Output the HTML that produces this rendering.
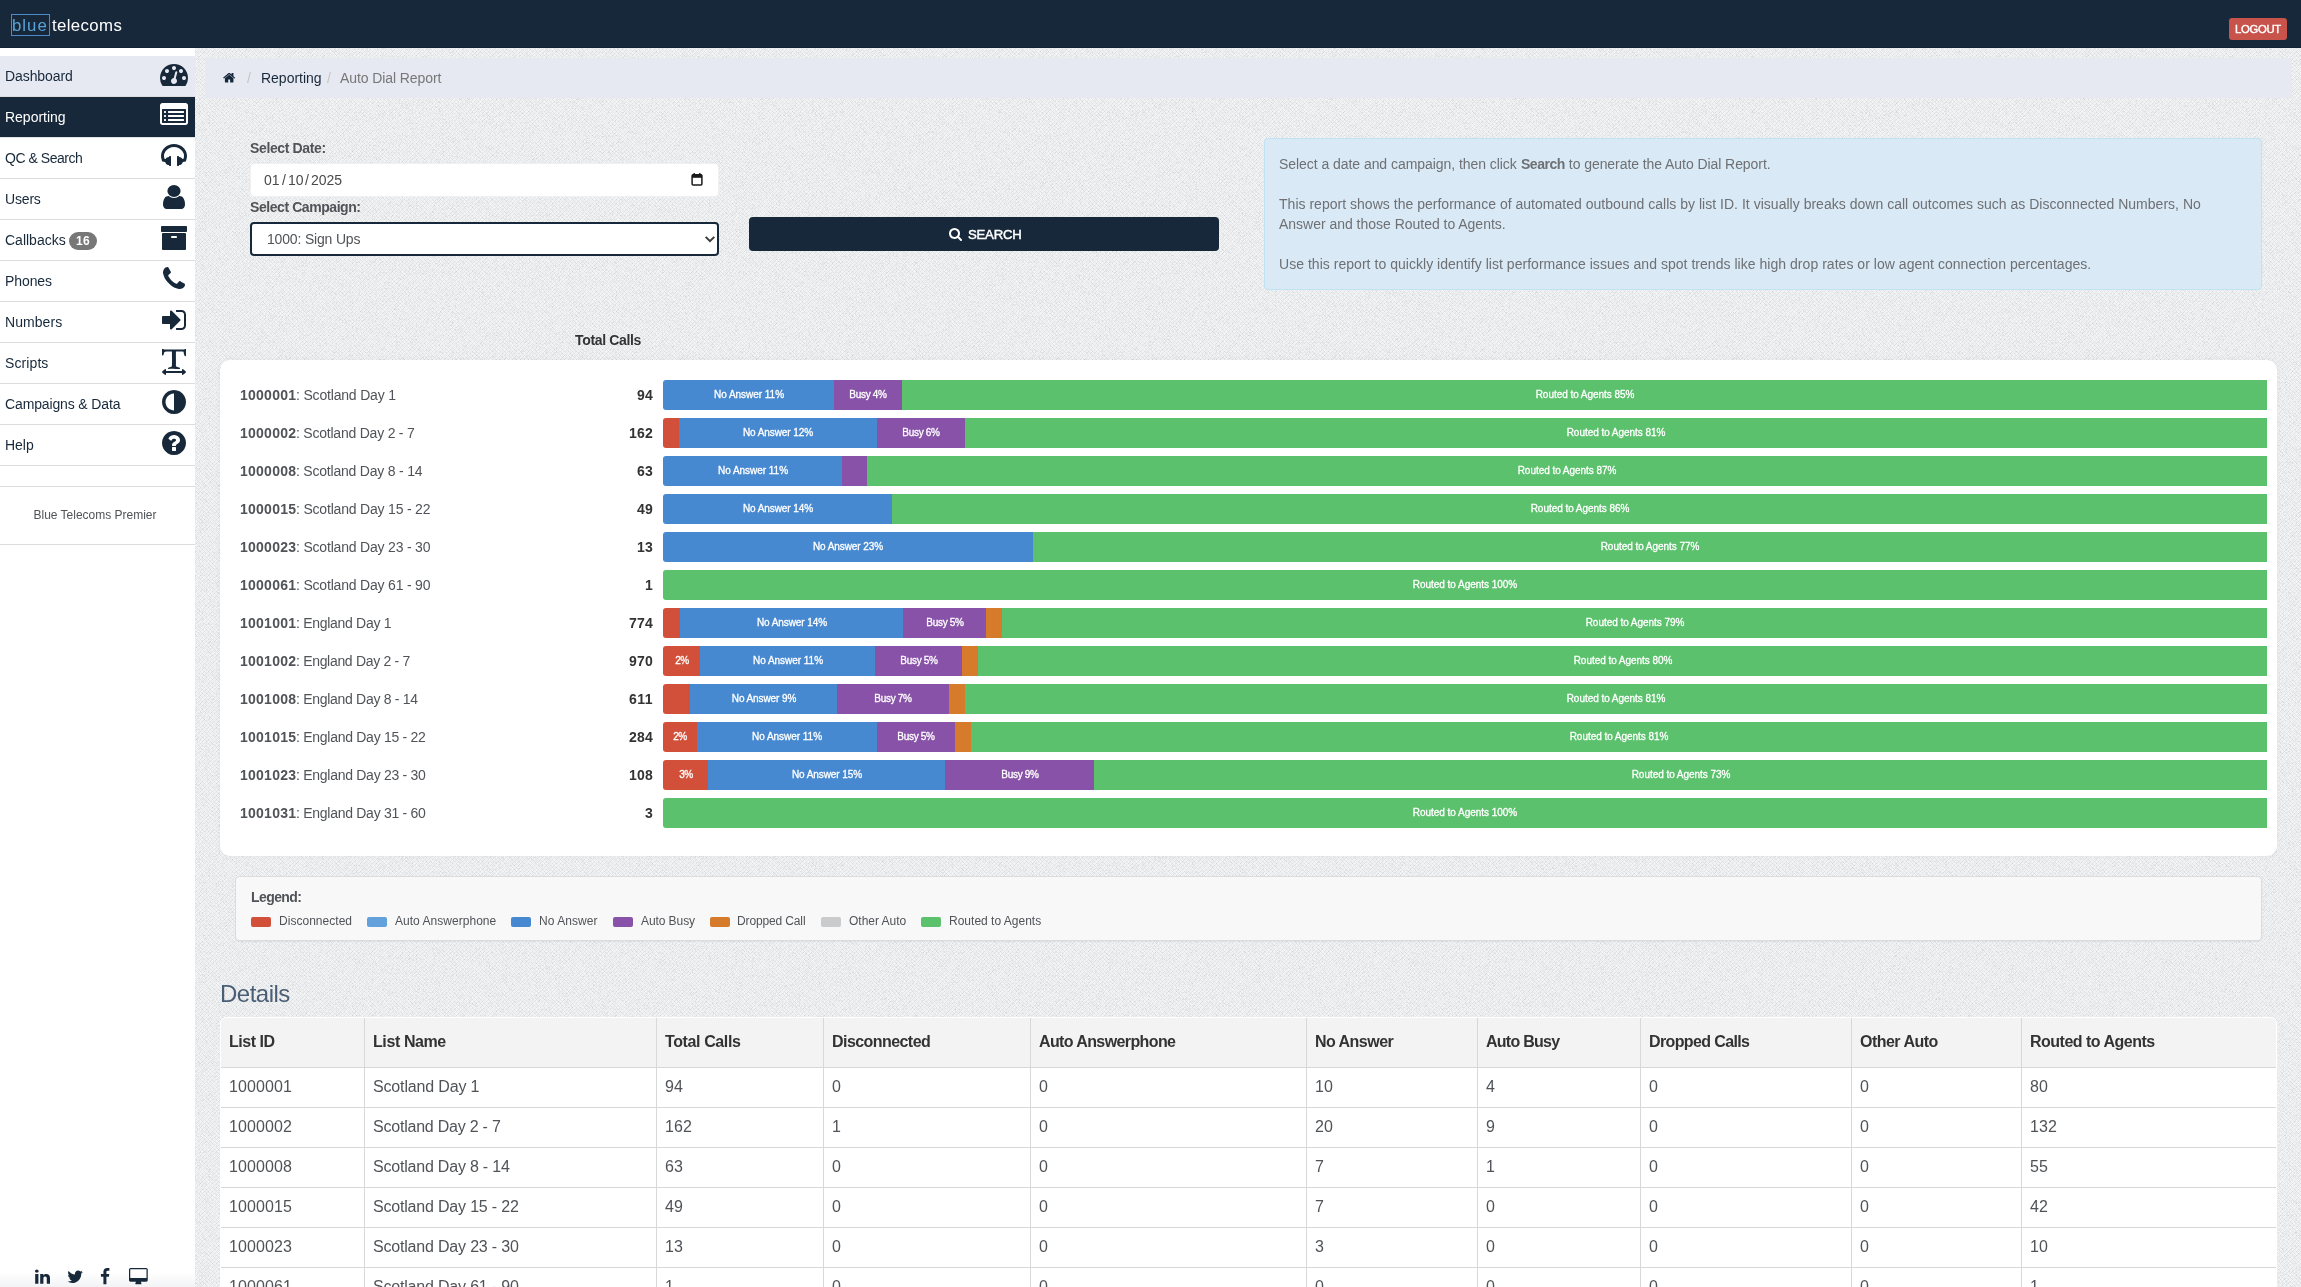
<!DOCTYPE html>
<html lang="en"><head><meta charset="utf-8"><title>Auto Dial Report</title>
<style>
html,body{margin:0;padding:0}
body{width:2301px;height:1287px;overflow:hidden;position:relative;font-family:"Liberation Sans",sans-serif;font-size:14px;color:#505357;
background-color:#f3f4f5;
background-image:repeating-linear-gradient(45deg,rgba(104,108,111,0.075) 0,rgba(104,108,111,0.075) 0.6px,rgba(255,255,255,0) 0.6px,rgba(255,255,255,0) 2.828px),repeating-linear-gradient(-45deg,rgba(104,108,111,0.075) 0,rgba(104,108,111,0.075) 0.6px,rgba(255,255,255,0) 0.6px,rgba(255,255,255,0) 2.828px);}
div,span.t,svg.i{position:absolute}
span.t{white-space:pre;will-change:transform}
b{font-weight:700}
</style></head>
<body>
<div id="page" style="left:0;top:0;width:2301px;height:1287px;overflow:hidden">
<svg class="i" style="left:195px;top:48px" width="2106" height="1239"><filter id="nz" x="0" y="0" width="100%" height="100%" color-interpolation-filters="sRGB"><feTurbulence type="fractalNoise" baseFrequency="1.7" numOctaves="1" seed="3"/><feColorMatrix type="matrix" values="0 0 0 0 0.41  0 0 0 0 0.43  0 0 0 0 0.44  -0.6 0 0 0 0.3"/></filter><rect width="2106" height="1239" filter="url(#nz)"/></svg>
<div style="left:0px;top:0px;width:2301px;height:48px;background:#17283a;box-sizing:border-box;border-bottom:1px solid #122132"></div>
<div style="left:11px;top:14px;width:39px;height:22px;box-sizing:border-box;border:1px solid #4b8bc8"></div>
<span id="t0" class="t" style="top:14.18px;line-height:24px;font-size:16.8px;color:#5aa2d6;letter-spacing:1.0px;left:12.3px;">blue</span>
<span id="t1" class="t" style="top:14.18px;line-height:24px;font-size:16.8px;color:#fff;letter-spacing:0.38px;left:51.6px;">telecoms</span>
<div style="left:2229px;top:18px;width:58px;height:22px;background:#c7534a;border-radius:3px"></div>
<span id="t2" class="t" style="top:21.38px;line-height:16px;font-size:11.3px;color:#fff;letter-spacing:-0.29px;left:2258.2px;transform:translateX(-50%);-webkit-text-stroke:0.4px #fff;">LOGOUT</span>
<div style="left:0px;top:48px;width:195px;height:1239px;background:#fff"></div>
<div style="left:0px;top:56px;width:195px;height:41px;background:#e7e9f2;box-sizing:border-box;border-bottom:1px solid #ddd"></div>
<span id="t3" class="t" style="top:65.95px;line-height:20px;font-size:14px;color:#17283a;letter-spacing:-0.087px;left:5px;">Dashboard</span>
<svg class="i" style="left:160.00px;top:60.00px" width="28.00" height="28" viewBox="0 0 1792 1792" preserveAspectRatio="none"><path fill="#17283a" transform="translate(0,1536) scale(1,-1)" d="M384 384q0 53 -37.5 90.5t-90.5 37.5t-90.5 -37.5t-37.5 -90.5t37.5 -90.5t90.5 -37.5t90.5 37.5t37.5 90.5zM576 832q0 53 -37.5 90.5t-90.5 37.5t-90.5 -37.5t-37.5 -90.5t37.5 -90.5t90.5 -37.5t90.5 37.5t37.5 90.5zM1004 351l101 382q6 26 -7.5 48.5t-38.5 29.5 t-48 -6.5t-30 -39.5l-101 -382q-60 -5 -107 -43.5t-63 -98.5q-20 -77 20 -146t117 -89t146 20t89 117q16 60 -6 117t-72 91zM1664 384q0 53 -37.5 90.5t-90.5 37.5t-90.5 -37.5t-37.5 -90.5t37.5 -90.5t90.5 -37.5t90.5 37.5t37.5 90.5zM1024 1024q0 53 -37.5 90.5 t-90.5 37.5t-90.5 -37.5t-37.5 -90.5t37.5 -90.5t90.5 -37.5t90.5 37.5t37.5 90.5zM1472 832q0 53 -37.5 90.5t-90.5 37.5t-90.5 -37.5t-37.5 -90.5t37.5 -90.5t90.5 -37.5t90.5 37.5t37.5 90.5zM1792 384q0 -261 -141 -483q-19 -29 -54 -29h-1402q-35 0 -54 29 q-141 221 -141 483q0 182 71 348t191 286t286 191t348 71t348 -71t286 -191t191 -286t71 -348z"/></svg>
<div style="left:0px;top:97px;width:195px;height:41px;background:#17283a;box-sizing:border-box;border-bottom:1px solid #e4e4e4"></div>
<span id="t4" class="t" style="top:106.95px;line-height:20px;font-size:14px;color:#fff;letter-spacing:-0.016px;left:5px;">Reporting</span>
<svg class="i" style="left:160.00px;top:101.00px" width="28.00" height="28" viewBox="0 0 1792 1792" preserveAspectRatio="none"><path fill="#fff" transform="translate(0,1536) scale(1,-1)" d="M384 352v-64q0 -13 -9.5 -22.5t-22.5 -9.5h-64q-13 0 -22.5 9.5t-9.5 22.5v64q0 13 9.5 22.5t22.5 9.5h64q13 0 22.5 -9.5t9.5 -22.5zM384 608v-64q0 -13 -9.5 -22.5t-22.5 -9.5h-64q-13 0 -22.5 9.5t-9.5 22.5v64q0 13 9.5 22.5t22.5 9.5h64q13 0 22.5 -9.5t9.5 -22.5z M384 864v-64q0 -13 -9.5 -22.5t-22.5 -9.5h-64q-13 0 -22.5 9.5t-9.5 22.5v64q0 13 9.5 22.5t22.5 9.5h64q13 0 22.5 -9.5t9.5 -22.5zM1536 352v-64q0 -13 -9.5 -22.5t-22.5 -9.5h-960q-13 0 -22.5 9.5t-9.5 22.5v64q0 13 9.5 22.5t22.5 9.5h960q13 0 22.5 -9.5t9.5 -22.5z M1536 608v-64q0 -13 -9.5 -22.5t-22.5 -9.5h-960q-13 0 -22.5 9.5t-9.5 22.5v64q0 13 9.5 22.5t22.5 9.5h960q13 0 22.5 -9.5t9.5 -22.5zM1536 864v-64q0 -13 -9.5 -22.5t-22.5 -9.5h-960q-13 0 -22.5 9.5t-9.5 22.5v64q0 13 9.5 22.5t22.5 9.5h960q13 0 22.5 -9.5 t9.5 -22.5zM1664 160v832q0 13 -9.5 22.5t-22.5 9.5h-1472q-13 0 -22.5 -9.5t-9.5 -22.5v-832q0 -13 9.5 -22.5t22.5 -9.5h1472q13 0 22.5 9.5t9.5 22.5zM1792 1248v-1088q0 -66 -47 -113t-113 -47h-1472q-66 0 -113 47t-47 113v1088q0 66 47 113t113 47h1472q66 0 113 -47 t47 -113z"/></svg>
<div style="left:0px;top:138px;width:195px;height:41px;background:#fff;box-sizing:border-box;border-bottom:1px solid #ddd"></div>
<span id="t5" class="t" style="top:147.95px;line-height:20px;font-size:14px;color:#17283a;letter-spacing:-0.462px;left:5px;">QC &amp; Search</span>
<svg class="i" style="left:161.00px;top:142.00px" width="26.00" height="28" viewBox="0 0 1664 1792" preserveAspectRatio="none"><path fill="#17283a" transform="translate(0,1536) scale(1,-1)" d="M1664 650q0 -166 -60 -314l-20 -49l-185 -33q-22 -83 -90.5 -136.5t-156.5 -53.5v-32q0 -14 -9 -23t-23 -9h-64q-14 0 -23 9t-9 23v576q0 14 9 23t23 9h64q14 0 23 -9t9 -23v-32q71 0 130 -35.5t93 -95.5l68 12q29 95 29 193q0 148 -88 279t-236.5 209t-315.5 78 t-315.5 -78t-236.5 -209t-88 -279q0 -98 29 -193l68 -12q34 60 93 95.5t130 35.5v32q0 14 9 23t23 9h64q14 0 23 -9t9 -23v-576q0 -14 -9 -23t-23 -9h-64q-14 0 -23 9t-9 23v32q-88 0 -156.5 53.5t-90.5 136.5l-185 33l-20 49q-60 148 -60 314q0 151 67 291t179 242.5 t266 163.5t320 61t320 -61t266 -163.5t179 -242.5t67 -291z"/></svg>
<div style="left:0px;top:179px;width:195px;height:41px;background:#fff;box-sizing:border-box;border-bottom:1px solid #ddd"></div>
<span id="t6" class="t" style="top:188.95px;line-height:20px;font-size:14px;color:#17283a;letter-spacing:-0.172px;left:5px;">Users</span>
<svg class="i" style="left:163.00px;top:183.00px" width="22.00" height="28" viewBox="0 0 1280 1792" preserveAspectRatio="none"><path fill="#17283a" transform="translate(0,1536) scale(1,-1)" d="M1280 137q0 -109 -62.5 -187t-150.5 -78h-854q-88 0 -150.5 78t-62.5 187q0 85 8.5 160.5t31.5 152t58.5 131t94 89t134.5 34.5q131 -128 313 -128t313 128q76 0 134.5 -34.5t94 -89t58.5 -131t31.5 -152t8.5 -160.5zM1024 1024q0 -159 -112.5 -271.5t-271.5 -112.5 t-271.5 112.5t-112.5 271.5t112.5 271.5t271.5 112.5t271.5 -112.5t112.5 -271.5z"/></svg>
<div style="left:0px;top:220px;width:195px;height:41px;background:#fff;box-sizing:border-box;border-bottom:1px solid #ddd"></div>
<span id="t7" class="t" style="top:229.95px;line-height:20px;font-size:14px;color:#17283a;left:5px;">Callbacks</span>
<svg class="i" style="left:160.00px;top:224.00px" width="28.00" height="28" viewBox="0 0 1792 1792" preserveAspectRatio="none"><path fill="#17283a" transform="translate(0,1536) scale(1,-1)" d="M1088 704q0 26 -19 45t-45 19h-256q-26 0 -45 -19t-19 -45t19 -45t45 -19h256q26 0 45 19t19 45zM1664 896v-960q0 -26 -19 -45t-45 -19h-1408q-26 0 -45 19t-19 45v960q0 26 19 45t45 19h1408q26 0 45 -19t19 -45zM1728 1344v-256q0 -26 -19 -45t-45 -19h-1536 q-26 0 -45 19t-19 45v256q0 26 19 45t45 19h1536q26 0 45 -19t19 -45z"/></svg>
<div style="left:0px;top:261px;width:195px;height:41px;background:#fff;box-sizing:border-box;border-bottom:1px solid #ddd"></div>
<span id="t8" class="t" style="top:270.95px;line-height:20px;font-size:14px;color:#17283a;letter-spacing:-0.094px;left:5px;">Phones</span>
<svg class="i" style="left:163.00px;top:265.00px" width="22.00" height="28" viewBox="0 0 1408 1792" preserveAspectRatio="none"><path fill="#17283a" transform="translate(0,1536) scale(1,-1)" d="M1408 296q0 -27 -10 -70.5t-21 -68.5q-21 -50 -122 -106q-94 -51 -186 -51q-27 0 -53 3.5t-57.5 12.5t-47 14.5t-55.5 20.5t-49 18q-98 35 -175 83q-127 79 -264 216t-216 264q-48 77 -83 175q-3 9 -18 49t-20.5 55.5t-14.5 47t-12.5 57.5t-3.5 53q0 92 51 186 q56 101 106 122q25 11 68.5 21t70.5 10q14 0 21 -3q18 -6 53 -76q11 -19 30 -54t35 -63.5t31 -53.5q3 -4 17.5 -25t21.5 -35.5t7 -28.5q0 -20 -28.5 -50t-62 -55t-62 -53t-28.5 -46q0 -9 5 -22.5t8.5 -20.5t14 -24t11.5 -19q76 -137 174 -235t235 -174q2 -1 19 -11.5t24 -14 t20.5 -8.5t22.5 -5q18 0 46 28.5t53 62t55 62t50 28.5q14 0 28.5 -7t35.5 -21.5t25 -17.5q25 -15 53.5 -31t63.5 -35t54 -30q70 -35 76 -53q3 -7 3 -21z"/></svg>
<div style="left:0px;top:302px;width:195px;height:41px;background:#fff;box-sizing:border-box;border-bottom:1px solid #ddd"></div>
<span id="t9" class="t" style="top:311.95px;line-height:20px;font-size:14px;color:#17283a;letter-spacing:0.065px;left:5px;">Numbers</span>
<svg class="i" style="left:162.00px;top:306.00px" width="24.00" height="28" viewBox="0 0 1536 1792" preserveAspectRatio="none"><path fill="#17283a" transform="translate(0,1536) scale(1,-1)" d="M1184 640q0 -26 -19 -45l-544 -544q-19 -19 -45 -19t-45 19t-19 45v288h-448q-26 0 -45 19t-19 45v384q0 26 19 45t45 19h448v288q0 26 19 45t45 19t45 -19l544 -544q19 -19 19 -45zM1536 992v-704q0 -119 -84.5 -203.5t-203.5 -84.5h-320q-13 0 -22.5 9.5t-9.5 22.5 q0 4 -1 20t-0.5 26.5t3 23.5t10 19.5t20.5 6.5h320q66 0 113 47t47 113v704q0 66 -47 113t-113 47h-288h-11h-13t-11.5 1t-11.5 3t-8 5.5t-7 9t-2 13.5q0 4 -1 20t-0.5 26.5t3 23.5t10 19.5t20.5 6.5h320q119 0 203.5 -84.5t84.5 -203.5z"/></svg>
<div style="left:0px;top:343px;width:195px;height:41px;background:#fff;box-sizing:border-box;border-bottom:1px solid #ddd"></div>
<span id="t10" class="t" style="top:352.95px;line-height:20px;font-size:14px;color:#17283a;letter-spacing:0.096px;left:5px;">Scripts</span>
<svg class="i" style="left:162.00px;top:347.00px" width="24.00" height="28" viewBox="0 0 1536 1792" preserveAspectRatio="none"><path fill="#17283a" transform="translate(0,1536) scale(1,-1)" d="M81 1407l54 -27q12 -5 211 -5q44 0 132 2t132 2q70 0 246.5 1t304.5 0.5t247 -4.5q33 -1 56 31l42 1q4 0 14 -0.5t14 -0.5q2 -112 2 -336q0 -80 -5 -109q-39 -14 -68 -18q-25 44 -54 128q-3 9 -11 47.5t-15 73.5t-7 36q-10 13 -27 19q-5 2 -66 2q-30 0 -93 1t-103 1 t-94 -2t-96 -7q-9 -81 -8 -136l1 -152v52q0 -55 1 -154t1.5 -180t0.5 -153q0 -16 -2.5 -71.5t0 -91.5t12.5 -69q40 -21 124 -42.5t120 -37.5q5 -40 5 -50q0 -14 -3 -29l-34 -1q-76 -2 -218 8t-207 10q-50 0 -151 -9t-152 -9q-3 51 -3 52v9q17 27 61.5 43t98.5 29t78 27 q7 16 11.5 74t6 145.5t1.5 155t-0.5 153.5t-0.5 89q0 7 -2.5 21.5t-2.5 22.5q0 7 0.5 44t1 73t0 76.5t-3 67.5t-6.5 32q-11 12 -162 12q-41 0 -163 -13.5t-138 -24.5q-19 -12 -34 -71.5t-31.5 -111.5t-42.5 -54q-42 26 -56 44v383zM1310 125q12 0 42 -19.5t57.5 -41.5 t59.5 -49t36 -30q26 -21 26 -49t-26 -49q-4 -3 -36 -30t-59.5 -49t-57.5 -41.5t-42 -19.5q-13 0 -20.5 10.5t-10 28.5t-2.5 33.5t1.5 33t1.5 19.5h-1024q0 -2 1.5 -19.5t1.5 -33t-2.5 -33.5t-10 -28.5t-20.5 -10.5q-12 0 -42 19.5t-57.5 41.5t-59.5 49t-36 30q-26 21 -26 49 t26 49q4 3 36 30t59.5 49t57.5 41.5t42 19.5q13 0 20.5 -10.5t10 -28.5t2.5 -33.5t-1.5 -33t-1.5 -19.5h1024q0 2 -1.5 19.5t-1.5 33t2.5 33.5t10 28.5t20.5 10.5z"/></svg>
<div style="left:0px;top:384px;width:195px;height:41px;background:#fff;box-sizing:border-box;border-bottom:1px solid #ddd"></div>
<span id="t11" class="t" style="top:393.95px;line-height:20px;font-size:14px;color:#17283a;letter-spacing:-0.135px;left:5px;">Campaigns &amp; Data</span>
<svg class="i" style="left:162.00px;top:388.00px" width="24.00" height="28" viewBox="0 0 1536 1792" preserveAspectRatio="none"><path fill="#17283a" transform="translate(0,1536) scale(1,-1)" d="M768 96v1088q-148 0 -273 -73t-198 -198t-73 -273t73 -273t198 -198t273 -73zM1536 640q0 -209 -103 -385.5t-279.5 -279.5t-385.5 -103t-385.5 103t-279.5 279.5t-103 385.5t103 385.5t279.5 279.5t385.5 103t385.5 -103t279.5 -279.5t103 -385.5z"/></svg>
<div style="left:0px;top:425px;width:195px;height:41px;background:#fff;box-sizing:border-box;border-bottom:1px solid #ddd"></div>
<span id="t12" class="t" style="top:434.95px;line-height:20px;font-size:14px;color:#17283a;letter-spacing:-0.027px;left:5px;">Help</span>
<svg class="i" style="left:162.00px;top:429.00px" width="24.00" height="28" viewBox="0 0 1536 1792" preserveAspectRatio="none"><path fill="#17283a" transform="translate(0,1536) scale(1,-1)" d="M896 160v192q0 14 -9 23t-23 9h-192q-14 0 -23 -9t-9 -23v-192q0 -14 9 -23t23 -9h192q14 0 23 9t9 23zM1152 832q0 88 -55.5 163t-138.5 116t-170 41q-243 0 -371 -213q-15 -24 8 -42l132 -100q7 -6 19 -6q16 0 25 12q53 68 86 92q34 24 86 24q48 0 85.5 -26t37.5 -59 q0 -38 -20 -61t-68 -45q-63 -28 -115.5 -86.5t-52.5 -125.5v-36q0 -14 9 -23t23 -9h192q14 0 23 9t9 23q0 19 21.5 49.5t54.5 49.5q32 18 49 28.5t46 35t44.5 48t28 60.5t12.5 81zM1536 640q0 -209 -103 -385.5t-279.5 -279.5t-385.5 -103t-385.5 103t-279.5 279.5 t-103 385.5t103 385.5t279.5 279.5t385.5 103t385.5 -103t279.5 -279.5t103 -385.5z"/></svg>
<div style="left:69px;top:232px;width:28px;height:18px;background:#777;border-radius:10px"></div>
<span id="t13" class="t" style="top:232.64px;line-height:17px;font-size:12px;font-weight:700;color:#fff;letter-spacing:0.211px;left:83px;transform:translateX(-50%);">16</span>
<div style="left:0px;top:486px;width:195px;height:1px;background:#ddd"></div>
<div style="left:0px;top:544px;width:195px;height:1px;background:#ddd"></div>
<span id="t14" class="t" style="top:507.04px;line-height:17px;font-size:12px;letter-spacing:-0.012px;left:95.3px;transform:translateX(-50%);">Blue Telecoms Premier</span>
<div style="left:0px;top:1272px;width:195px;height:15px;background:linear-gradient(to bottom,rgba(233,235,238,0),rgba(233,235,238,0.6))"></div>
<svg class="i" style="left:34.70px;top:1268.00px" width="15.00" height="17.5" viewBox="0 0 1536 1792" preserveAspectRatio="none"><path fill="#17283a" transform="translate(0,1536) scale(1,-1)" d="M349 911v-991h-330v991h330zM370 1217q1 -73 -50.5 -122t-135.5 -49h-2q-82 0 -132 49t-50 122q0 74 51.5 122.5t134.5 48.5t133 -48.5t51 -122.5zM1536 488v-568h-329v530q0 105 -40.5 164.5t-126.5 59.5q-63 0 -105.5 -34.5t-63.5 -85.5q-11 -30 -11 -81v-553h-329 q2 399 2 647t-1 296l-1 48h329v-144h-2q20 32 41 56t56.5 52t87 43.5t114.5 15.5q171 0 275 -113.5t104 -332.5z"/></svg>
<svg class="i" style="left:66.90px;top:1268.00px" width="16.25" height="17.5" viewBox="0 0 1664 1792" preserveAspectRatio="none"><path fill="#17283a" transform="translate(0,1536) scale(1,-1)" d="M1620 1128q-67 -98 -162 -167q1 -14 1 -42q0 -130 -38 -259.5t-115.5 -248.5t-184.5 -210.5t-258 -146t-323 -54.5q-271 0 -496 145q35 -4 78 -4q225 0 401 138q-105 2 -188 64.5t-114 159.5q33 -5 61 -5q43 0 85 11q-112 23 -185.5 111.5t-73.5 205.5v4q68 -38 146 -41 q-66 44 -105 115t-39 154q0 88 44 163q121 -149 294.5 -238.5t371.5 -99.5q-8 38 -8 74q0 134 94.5 228.5t228.5 94.5q140 0 236 -102q109 21 205 78q-37 -115 -142 -178q93 10 186 50z"/></svg>
<svg class="i" style="left:100.10px;top:1268.00px" width="10.00" height="17.5" viewBox="0 0 1024 1792" preserveAspectRatio="none"><path fill="#17283a" transform="translate(0,1536) scale(1,-1)" d="M959 1524v-264h-157q-86 0 -116 -36t-30 -108v-189h293l-39 -296h-254v-759h-306v759h-255v296h255v218q0 186 104 288.5t277 102.5q147 0 228 -12z"/></svg>
<svg class="i" style="left:129.30px;top:1268.00px" width="18.75" height="17.5" viewBox="0 0 1920 1792" preserveAspectRatio="none"><path fill="#17283a" transform="translate(0,1536) scale(1,-1)" d="M1792 544v832q0 13 -9.5 22.5t-22.5 9.5h-1600q-13 0 -22.5 -9.5t-9.5 -22.5v-832q0 -13 9.5 -22.5t22.5 -9.5h1600q13 0 22.5 9.5t9.5 22.5zM1920 1376v-1088q0 -66 -47 -113t-113 -47h-544q0 -37 16 -77.5t32 -71t16 -43.5q0 -26 -19 -45t-45 -19h-512q-26 0 -45 19 t-19 45q0 14 16 44t32 70t16 78h-544q-66 0 -113 47t-47 113v1088q0 66 47 113t113 47h1600q66 0 113 -47t47 -113z"/></svg>
<div style="left:205px;top:58px;width:2087px;height:40px;background:#e7e9f2;border-radius:1px"></div>
<svg class="i" style="left:222.80px;top:71.10px" width="12.35" height="13.3" viewBox="0 0 1664 1792" preserveAspectRatio="none"><path fill="#17283a" transform="translate(0,1536) scale(1,-1)" d="M1408 544v-480q0 -26 -19 -45t-45 -19h-384v384h-256v-384h-384q-26 0 -45 19t-19 45v480q0 1 0.5 3t0.5 3l575 474l575 -474q1 -2 1 -6zM1631 613l-62 -74q-8 -9 -21 -11h-3q-13 0 -21 7l-692 577l-692 -577q-12 -8 -24 -7q-13 2 -21 11l-62 74q-8 10 -7 23.5t11 21.5 l719 599q32 26 76 26t76 -26l244 -204v195q0 14 9 23t23 9h192q14 0 23 -9t9 -23v-408l219 -182q10 -8 11 -21.5t-7 -23.5z"/></svg>
<span id="t15" class="t" style="top:68.05px;line-height:20px;font-size:14px;color:#c4c4c4;left:247.2px;">/</span>
<span id="t16" class="t" style="top:68.05px;line-height:20px;font-size:14px;color:#17283a;letter-spacing:-0.016px;left:260.6px;">Reporting</span>
<span id="t17" class="t" style="top:68.05px;line-height:20px;font-size:14px;color:#c4c4c4;left:326.7px;">/</span>
<span id="t18" class="t" style="top:68.05px;line-height:20px;font-size:14px;color:#777;letter-spacing:-0.087px;left:340.3px;">Auto Dial Report</span>
<span id="t19" class="t" style="top:138.35px;line-height:20px;font-size:14px;font-weight:700;letter-spacing:-0.363px;left:250px;">Select Date:</span>
<div style="left:250px;top:163px;width:469px;height:34px;background:#fff;border-radius:4px;box-sizing:border-box;border:1px solid #f0f0f0"></div>
<span id="t20" class="t" style="top:169.95px;line-height:20px;font-size:14px;color:#4a4a4a;left:263.6px;">01</span>
<span id="t21" class="t" style="top:169.95px;line-height:20px;font-size:14px;color:#4a4a4a;left:281.8px;">/</span>
<span id="t22" class="t" style="top:169.95px;line-height:20px;font-size:14px;color:#4a4a4a;left:287.7px;">10</span>
<span id="t23" class="t" style="top:169.95px;line-height:20px;font-size:14px;color:#4a4a4a;left:305.0px;">/</span>
<span id="t24" class="t" style="top:169.95px;line-height:20px;font-size:14px;color:#4a4a4a;left:311.1px;">2025</span>
<svg class="i" style="left:690px;top:172px" width="14" height="15" viewBox="0 0 14 15"><rect x="2.1" y="2.7" width="9.8" height="10.2" rx="1" fill="none" stroke="#1a1a1a" stroke-width="1.5"/><rect x="2" y="2.6" width="10" height="3.2" fill="#1a1a1a"/><rect x="3.5" y="1" width="1.4" height="2" fill="#1a1a1a"/><rect x="9.1" y="1" width="1.4" height="2" fill="#1a1a1a"/></svg>
<span id="t25" class="t" style="top:197.25px;line-height:20px;font-size:14px;font-weight:700;letter-spacing:-0.430px;left:250px;">Select Campaign:</span>
<div style="left:250px;top:222px;width:469px;height:34px;background:#fff;border-radius:4px;box-sizing:border-box;border:2px solid #17283a"></div>
<span id="t26" class="t" style="top:229.15px;line-height:20px;font-size:14px;letter-spacing:-0.174px;left:267.3px;">1000: Sign Ups</span>
<svg class="i" style="left:704px;top:234px" width="12" height="10" viewBox="0 0 12 10"><path d="M1.7 2.9 L6 7.2 L10.3 2.9" fill="none" stroke="#3c3c3c" stroke-width="2"/></svg>
<div style="left:749px;top:217px;width:470px;height:34px;background:#17283a;border-radius:4px"></div>
<svg class="i" style="left:949.00px;top:226.50px" width="13.00" height="14" viewBox="0 0 1664 1792" preserveAspectRatio="none"><path fill="#fff" transform="translate(0,1536) scale(1,-1)" d="M1152 704q0 185 -131.5 316.5t-316.5 131.5t-316.5 -131.5t-131.5 -316.5t131.5 -316.5t316.5 -131.5t316.5 131.5t131.5 316.5zM1664 -128q0 -52 -38 -90t-90 -38q-54 0 -90 38l-343 342q-179 -124 -399 -124q-143 0 -273.5 55.5t-225 150t-150 225t-55.5 273.5 t55.5 273.5t150 225t225 150t273.5 55.5t273.5 -55.5t225 -150t150 -225t55.5 -273.5q0 -220 -124 -399l343 -343q37 -37 37 -90z"/></svg>
<span id="t27" class="t" style="top:225.23px;line-height:19px;font-size:13.2px;color:#fff;letter-spacing:-0.24px;left:967.8px;-webkit-text-stroke:0.45px #fff;">SEARCH</span>
<div style="left:1264px;top:138px;width:998px;height:152px;background:#d9e9f5;box-sizing:border-box;border:1px solid #bfe3f0;border-radius:4px"></div>
<span id="t28" class="t" style="top:154.15px;line-height:20px;font-size:14px;color:#6e7073;letter-spacing:-0.051px;left:1279.3px;">Select a date and campaign, then click </span>
<span id="t29" class="t" style="top:154.15px;line-height:20px;font-size:14px;font-weight:700;color:#6e7073;letter-spacing:-0.482px;left:1520.9px;">Search</span>
<span id="t30" class="t" style="top:154.15px;line-height:20px;font-size:14px;color:#6e7073;letter-spacing:-0.066px;left:1564.7px;"> to generate the Auto Dial Report.</span>
<span id="t31" class="t" style="top:194.15px;line-height:20px;font-size:14px;color:#6e7073;letter-spacing:0.020px;left:1279.3px;">This report shows the performance of automated outbound calls by list ID. It visually breaks down call outcomes such as Disconnected Numbers, No</span>
<span id="t32" class="t" style="top:214.15px;line-height:20px;font-size:14px;color:#6e7073;letter-spacing:-0.019px;left:1279.3px;">Answer and those Routed to Agents.</span>
<span id="t33" class="t" style="top:254.15px;line-height:20px;font-size:14px;color:#6e7073;letter-spacing:0.034px;left:1279.3px;">Use this report to quickly identify list performance issues and spot trends like high drop rates or low agent connection percentages.</span>
<span id="t34" class="t" style="top:329.95px;line-height:20px;font-size:14px;font-weight:700;color:#333;letter-spacing:-0.335px;left:575.2px;">Total Calls</span>
<div style="left:220px;top:360px;width:2057px;height:496px;background:#fff;border-radius:10px;box-shadow:0 0 6px rgba(0,0,0,0.04)"></div>
<span id="t35" class="t" style="top:384.95px;line-height:20px;font-size:14px;font-weight:700;letter-spacing:0.246px;left:240px;">1000001</span>
<span id="t36" class="t" style="top:384.95px;line-height:20px;font-size:14px;letter-spacing:-0.180px;left:296.23px;">: Scotland Day 1</span>
<span id="t37" class="t" style="top:384.95px;line-height:20px;font-size:14px;font-weight:700;color:#333;letter-spacing:0.250px;right:1647.7px;">94</span>
<div style="left:663.2px;top:380px;width:171.0px;height:30px;background:#4789d1;border-radius:3px 0 0 3px;"></div>
<span id="t38" class="t" style="top:388.24px;line-height:14px;font-size:10px;color:#fff;letter-spacing:-0.028px;left:748.7px;transform:translateX(-50%);-webkit-text-stroke:0.3px #fff;">No Answer 11%</span>
<div style="left:834.2px;top:380px;width:67.8px;height:30px;background:#8852a8;"></div>
<span id="t39" class="t" style="top:388.24px;line-height:14px;font-size:10px;color:#fff;letter-spacing:-0.288px;left:868.1px;transform:translateX(-50%);-webkit-text-stroke:0.3px #fff;">Busy 4%</span>
<div style="left:902px;top:380px;width:1365px;height:30px;background:#5bc16c;"></div>
<span id="t40" class="t" style="top:388.24px;line-height:14px;font-size:10px;color:#fff;letter-spacing:-0.045px;left:1584.5px;transform:translateX(-50%);-webkit-text-stroke:0.3px #fff;">Routed to Agents 85%</span>
<span id="t41" class="t" style="top:422.95px;line-height:20px;font-size:14px;font-weight:700;letter-spacing:0.246px;left:240px;">1000002</span>
<span id="t42" class="t" style="top:422.95px;line-height:20px;font-size:14px;letter-spacing:-0.220px;left:296.23px;">: Scotland Day 2 - 7</span>
<span id="t43" class="t" style="top:422.95px;line-height:20px;font-size:14px;font-weight:700;color:#333;letter-spacing:0.250px;right:1647.7px;">162</span>
<div style="left:663.2px;top:418px;width:16.0px;height:30px;background:#d2503a;border-radius:3px 0 0 3px;"></div>
<div style="left:679.2px;top:418px;width:198.0px;height:30px;background:#4789d1;"></div>
<span id="t44" class="t" style="top:426.24px;line-height:14px;font-size:10px;color:#fff;letter-spacing:-0.085px;left:778.2px;transform:translateX(-50%);-webkit-text-stroke:0.3px #fff;">No Answer 12%</span>
<div style="left:877.2px;top:418px;width:88.0px;height:30px;background:#8852a8;"></div>
<span id="t45" class="t" style="top:426.24px;line-height:14px;font-size:10px;color:#fff;letter-spacing:-0.288px;left:921.2px;transform:translateX(-50%);-webkit-text-stroke:0.3px #fff;">Busy 6%</span>
<div style="left:965.2px;top:418px;width:1301.8px;height:30px;background:#5bc16c;"></div>
<span id="t46" class="t" style="top:426.24px;line-height:14px;font-size:10px;color:#fff;letter-spacing:-0.045px;left:1616.1px;transform:translateX(-50%);-webkit-text-stroke:0.3px #fff;">Routed to Agents 81%</span>
<span id="t47" class="t" style="top:460.95px;line-height:20px;font-size:14px;font-weight:700;letter-spacing:0.246px;left:240px;">1000008</span>
<span id="t48" class="t" style="top:460.95px;line-height:20px;font-size:14px;letter-spacing:-0.207px;left:296.23px;">: Scotland Day 8 - 14</span>
<span id="t49" class="t" style="top:460.95px;line-height:20px;font-size:14px;font-weight:700;color:#333;letter-spacing:0.250px;right:1647.7px;">63</span>
<div style="left:663.2px;top:456px;width:179.0px;height:30px;background:#4789d1;border-radius:3px 0 0 3px;"></div>
<span id="t50" class="t" style="top:464.24px;line-height:14px;font-size:10px;color:#fff;letter-spacing:-0.028px;left:752.7px;transform:translateX(-50%);-webkit-text-stroke:0.3px #fff;">No Answer 11%</span>
<div style="left:842.2px;top:456px;width:24.8px;height:30px;background:#8852a8;"></div>
<div style="left:867px;top:456px;width:1400px;height:30px;background:#5bc16c;"></div>
<span id="t51" class="t" style="top:464.24px;line-height:14px;font-size:10px;color:#fff;letter-spacing:-0.045px;left:1567.0px;transform:translateX(-50%);-webkit-text-stroke:0.3px #fff;">Routed to Agents 87%</span>
<span id="t52" class="t" style="top:498.95px;line-height:20px;font-size:14px;font-weight:700;letter-spacing:0.246px;left:240px;">1000015</span>
<span id="t53" class="t" style="top:498.95px;line-height:20px;font-size:14px;letter-spacing:-0.193px;left:296.23px;">: Scotland Day 15 - 22</span>
<span id="t54" class="t" style="top:498.95px;line-height:20px;font-size:14px;font-weight:700;color:#333;letter-spacing:0.250px;right:1647.7px;">49</span>
<div style="left:663.2px;top:494px;width:229.0px;height:30px;background:#4789d1;border-radius:3px 0 0 3px;"></div>
<span id="t55" class="t" style="top:502.24px;line-height:14px;font-size:10px;color:#fff;letter-spacing:-0.085px;left:777.7px;transform:translateX(-50%);-webkit-text-stroke:0.3px #fff;">No Answer 14%</span>
<div style="left:892.2px;top:494px;width:1374.8px;height:30px;background:#5bc16c;"></div>
<span id="t56" class="t" style="top:502.24px;line-height:14px;font-size:10px;color:#fff;letter-spacing:-0.045px;left:1579.6px;transform:translateX(-50%);-webkit-text-stroke:0.3px #fff;">Routed to Agents 86%</span>
<span id="t57" class="t" style="top:536.95px;line-height:20px;font-size:14px;font-weight:700;letter-spacing:0.246px;left:240px;">1000023</span>
<span id="t58" class="t" style="top:536.95px;line-height:20px;font-size:14px;letter-spacing:-0.193px;left:296.23px;">: Scotland Day 23 - 30</span>
<span id="t59" class="t" style="top:536.95px;line-height:20px;font-size:14px;font-weight:700;color:#333;letter-spacing:0.250px;right:1647.7px;">13</span>
<div style="left:663.2px;top:532px;width:370.0px;height:30px;background:#4789d1;border-radius:3px 0 0 3px;"></div>
<span id="t60" class="t" style="top:540.24px;line-height:14px;font-size:10px;color:#fff;letter-spacing:-0.085px;left:848.2px;transform:translateX(-50%);-webkit-text-stroke:0.3px #fff;">No Answer 23%</span>
<div style="left:1033.2px;top:532px;width:1233.8px;height:30px;background:#5bc16c;"></div>
<span id="t61" class="t" style="top:540.24px;line-height:14px;font-size:10px;color:#fff;letter-spacing:-0.045px;left:1650.1px;transform:translateX(-50%);-webkit-text-stroke:0.3px #fff;">Routed to Agents 77%</span>
<span id="t62" class="t" style="top:574.95px;line-height:20px;font-size:14px;font-weight:700;letter-spacing:0.246px;left:240px;">1000061</span>
<span id="t63" class="t" style="top:574.95px;line-height:20px;font-size:14px;letter-spacing:-0.193px;left:296.23px;">: Scotland Day 61 - 90</span>
<span id="t64" class="t" style="top:574.95px;line-height:20px;font-size:14px;font-weight:700;color:#333;letter-spacing:0.250px;right:1647.7px;">1</span>
<div style="left:663.2px;top:570px;width:1603.8px;height:30px;background:#5bc16c;border-radius:3px 0 0 3px;"></div>
<span id="t65" class="t" style="top:578.24px;line-height:14px;font-size:10px;color:#fff;letter-spacing:-0.036px;left:1465.1px;transform:translateX(-50%);-webkit-text-stroke:0.3px #fff;">Routed to Agents 100%</span>
<span id="t66" class="t" style="top:612.95px;line-height:20px;font-size:14px;font-weight:700;letter-spacing:0.246px;left:240px;">1001001</span>
<span id="t67" class="t" style="top:612.95px;line-height:20px;font-size:14px;letter-spacing:-0.295px;left:296.23px;">: England Day 1</span>
<span id="t68" class="t" style="top:612.95px;line-height:20px;font-size:14px;font-weight:700;color:#333;letter-spacing:0.250px;right:1647.7px;">774</span>
<div style="left:663.2px;top:608px;width:16.8px;height:30px;background:#d2503a;border-radius:3px 0 0 3px;"></div>
<div style="left:680px;top:608px;width:223.1px;height:30px;background:#4789d1;"></div>
<span id="t69" class="t" style="top:616.24px;line-height:14px;font-size:10px;color:#fff;letter-spacing:-0.085px;left:791.55px;transform:translateX(-50%);-webkit-text-stroke:0.3px #fff;">No Answer 14%</span>
<div style="left:903.1px;top:608px;width:83.0px;height:30px;background:#8852a8;"></div>
<span id="t70" class="t" style="top:616.24px;line-height:14px;font-size:10px;color:#fff;letter-spacing:-0.288px;left:944.6px;transform:translateX(-50%);-webkit-text-stroke:0.3px #fff;">Busy 5%</span>
<div style="left:986.1px;top:608px;width:16.0px;height:30px;background:#d67a2c;"></div>
<div style="left:1002.1px;top:608px;width:1264.9px;height:30px;background:#5bc16c;"></div>
<span id="t71" class="t" style="top:616.24px;line-height:14px;font-size:10px;color:#fff;letter-spacing:-0.045px;left:1634.55px;transform:translateX(-50%);-webkit-text-stroke:0.3px #fff;">Routed to Agents 79%</span>
<span id="t72" class="t" style="top:650.95px;line-height:20px;font-size:14px;font-weight:700;letter-spacing:0.246px;left:240px;">1001002</span>
<span id="t73" class="t" style="top:650.95px;line-height:20px;font-size:14px;letter-spacing:-0.314px;left:296.23px;">: England Day 2 - 7</span>
<span id="t74" class="t" style="top:650.95px;line-height:20px;font-size:14px;font-weight:700;color:#333;letter-spacing:0.250px;right:1647.7px;">970</span>
<div style="left:663.2px;top:646px;width:36.8px;height:30px;background:#d2503a;border-radius:3px 0 0 3px;"></div>
<span id="t75" class="t" style="top:654.24px;line-height:14px;font-size:10px;color:#fff;letter-spacing:-0.400px;left:681.6px;transform:translateX(-50%);-webkit-text-stroke:0.3px #fff;">2%</span>
<div style="left:700px;top:646px;width:175.1px;height:30px;background:#4789d1;"></div>
<span id="t76" class="t" style="top:654.24px;line-height:14px;font-size:10px;color:#fff;letter-spacing:-0.028px;left:787.55px;transform:translateX(-50%);-webkit-text-stroke:0.3px #fff;">No Answer 11%</span>
<div style="left:875.1px;top:646px;width:87.0px;height:30px;background:#8852a8;"></div>
<span id="t77" class="t" style="top:654.24px;line-height:14px;font-size:10px;color:#fff;letter-spacing:-0.288px;left:918.6px;transform:translateX(-50%);-webkit-text-stroke:0.3px #fff;">Busy 5%</span>
<div style="left:962.1px;top:646px;width:16.0px;height:30px;background:#d67a2c;"></div>
<div style="left:978.1px;top:646px;width:1288.9px;height:30px;background:#5bc16c;"></div>
<span id="t78" class="t" style="top:654.24px;line-height:14px;font-size:10px;color:#fff;letter-spacing:-0.045px;left:1622.55px;transform:translateX(-50%);-webkit-text-stroke:0.3px #fff;">Routed to Agents 80%</span>
<span id="t79" class="t" style="top:688.95px;line-height:20px;font-size:14px;font-weight:700;letter-spacing:0.246px;left:240px;">1001008</span>
<span id="t80" class="t" style="top:688.95px;line-height:20px;font-size:14px;letter-spacing:-0.295px;left:296.23px;">: England Day 8 - 14</span>
<span id="t81" class="t" style="top:688.95px;line-height:20px;font-size:14px;font-weight:700;color:#333;letter-spacing:0.505px;right:1647.7px;">611</span>
<div style="left:663.2px;top:684px;width:26.8px;height:30px;background:#d2503a;border-radius:3px 0 0 3px;"></div>
<div style="left:690px;top:684px;width:147.1px;height:30px;background:#4789d1;"></div>
<span id="t82" class="t" style="top:692.24px;line-height:14px;font-size:10px;color:#fff;letter-spacing:-0.103px;left:763.55px;transform:translateX(-50%);-webkit-text-stroke:0.3px #fff;">No Answer 9%</span>
<div style="left:837.1px;top:684px;width:112.0px;height:30px;background:#8852a8;"></div>
<span id="t83" class="t" style="top:692.24px;line-height:14px;font-size:10px;color:#fff;letter-spacing:-0.288px;left:893.1px;transform:translateX(-50%);-webkit-text-stroke:0.3px #fff;">Busy 7%</span>
<div style="left:949.1px;top:684px;width:16.0px;height:30px;background:#d67a2c;"></div>
<div style="left:965.1px;top:684px;width:1301.9px;height:30px;background:#5bc16c;"></div>
<span id="t84" class="t" style="top:692.24px;line-height:14px;font-size:10px;color:#fff;letter-spacing:-0.045px;left:1616.05px;transform:translateX(-50%);-webkit-text-stroke:0.3px #fff;">Routed to Agents 81%</span>
<span id="t85" class="t" style="top:726.95px;line-height:20px;font-size:14px;font-weight:700;letter-spacing:0.246px;left:240px;">1001015</span>
<span id="t86" class="t" style="top:726.95px;line-height:20px;font-size:14px;letter-spacing:-0.276px;left:296.23px;">: England Day 15 - 22</span>
<span id="t87" class="t" style="top:726.95px;line-height:20px;font-size:14px;font-weight:700;color:#333;letter-spacing:0.250px;right:1647.7px;">284</span>
<div style="left:663.2px;top:722px;width:34.0px;height:30px;background:#d2503a;border-radius:3px 0 0 3px;"></div>
<span id="t88" class="t" style="top:730.24px;line-height:14px;font-size:10px;color:#fff;letter-spacing:-0.400px;left:680.2px;transform:translateX(-50%);-webkit-text-stroke:0.3px #fff;">2%</span>
<div style="left:697.2px;top:722px;width:179.9px;height:30px;background:#4789d1;"></div>
<span id="t89" class="t" style="top:730.24px;line-height:14px;font-size:10px;color:#fff;letter-spacing:-0.028px;left:787.15px;transform:translateX(-50%);-webkit-text-stroke:0.3px #fff;">No Answer 11%</span>
<div style="left:877.1px;top:722px;width:78.0px;height:30px;background:#8852a8;"></div>
<span id="t90" class="t" style="top:730.24px;line-height:14px;font-size:10px;color:#fff;letter-spacing:-0.288px;left:916.1px;transform:translateX(-50%);-webkit-text-stroke:0.3px #fff;">Busy 5%</span>
<div style="left:955.1px;top:722px;width:16.0px;height:30px;background:#d67a2c;"></div>
<div style="left:971.1px;top:722px;width:1295.9px;height:30px;background:#5bc16c;"></div>
<span id="t91" class="t" style="top:730.24px;line-height:14px;font-size:10px;color:#fff;letter-spacing:-0.045px;left:1619.05px;transform:translateX(-50%);-webkit-text-stroke:0.3px #fff;">Routed to Agents 81%</span>
<span id="t92" class="t" style="top:764.95px;line-height:20px;font-size:14px;font-weight:700;letter-spacing:0.246px;left:240px;">1001023</span>
<span id="t93" class="t" style="top:764.95px;line-height:20px;font-size:14px;letter-spacing:-0.276px;left:296.23px;">: England Day 23 - 30</span>
<span id="t94" class="t" style="top:764.95px;line-height:20px;font-size:14px;font-weight:700;color:#333;letter-spacing:0.250px;right:1647.7px;">108</span>
<div style="left:663.2px;top:760px;width:45.0px;height:30px;background:#d2503a;border-radius:3px 0 0 3px;"></div>
<span id="t95" class="t" style="top:768.24px;line-height:14px;font-size:10px;color:#fff;letter-spacing:-0.400px;left:685.7px;transform:translateX(-50%);-webkit-text-stroke:0.3px #fff;">3%</span>
<div style="left:708.2px;top:760px;width:236.9px;height:30px;background:#4789d1;"></div>
<span id="t96" class="t" style="top:768.24px;line-height:14px;font-size:10px;color:#fff;letter-spacing:-0.085px;left:826.65px;transform:translateX(-50%);-webkit-text-stroke:0.3px #fff;">No Answer 15%</span>
<div style="left:945.1px;top:760px;width:148.9px;height:30px;background:#8852a8;"></div>
<span id="t97" class="t" style="top:768.24px;line-height:14px;font-size:10px;color:#fff;letter-spacing:-0.288px;left:1019.55px;transform:translateX(-50%);-webkit-text-stroke:0.3px #fff;">Busy 9%</span>
<div style="left:1094px;top:760px;width:1173px;height:30px;background:#5bc16c;"></div>
<span id="t98" class="t" style="top:768.24px;line-height:14px;font-size:10px;color:#fff;letter-spacing:-0.045px;left:1680.5px;transform:translateX(-50%);-webkit-text-stroke:0.3px #fff;">Routed to Agents 73%</span>
<span id="t99" class="t" style="top:802.95px;line-height:20px;font-size:14px;font-weight:700;letter-spacing:0.246px;left:240px;">1001031</span>
<span id="t100" class="t" style="top:802.95px;line-height:20px;font-size:14px;letter-spacing:-0.276px;left:296.23px;">: England Day 31 - 60</span>
<span id="t101" class="t" style="top:802.95px;line-height:20px;font-size:14px;font-weight:700;color:#333;letter-spacing:0.250px;right:1647.7px;">3</span>
<div style="left:663.2px;top:798px;width:1603.8px;height:30px;background:#5bc16c;border-radius:3px 0 0 3px;"></div>
<span id="t102" class="t" style="top:806.24px;line-height:14px;font-size:10px;color:#fff;letter-spacing:-0.036px;left:1465.1px;transform:translateX(-50%);-webkit-text-stroke:0.3px #fff;">Routed to Agents 100%</span>
<div style="left:235px;top:876px;width:2027px;height:65px;background:#f8f8f8;box-sizing:border-box;border:1px solid #dcdcdc;border-radius:4px;box-shadow:0 1px 1px rgba(0,0,0,0.05)"></div>
<span id="t103" class="t" style="top:887.05px;line-height:20px;font-size:14px;font-weight:700;letter-spacing:-0.583px;left:251px;">Legend:</span>
<div style="left:251px;top:917px;width:20px;height:10px;background:#d2503a;border-radius:2px"></div>
<span id="t104" class="t" style="top:912.94px;line-height:17px;font-size:12px;letter-spacing:0.030px;left:279.2px;">Disconnected</span>
<div style="left:367px;top:917px;width:20px;height:10px;background:#63a1dc;border-radius:2px"></div>
<span id="t105" class="t" style="top:912.94px;line-height:17px;font-size:12px;letter-spacing:0.034px;left:394.8px;">Auto Answerphone</span>
<div style="left:511.3px;top:917px;width:20px;height:10px;background:#4789d1;border-radius:2px"></div>
<span id="t106" class="t" style="top:912.94px;line-height:17px;font-size:12px;letter-spacing:0.050px;left:539px;">No Answer</span>
<div style="left:613px;top:917px;width:20px;height:10px;background:#8852a8;border-radius:2px"></div>
<span id="t107" class="t" style="top:912.94px;line-height:17px;font-size:12px;letter-spacing:-0.080px;left:640.7px;">Auto Busy</span>
<div style="left:709.8px;top:917px;width:20px;height:10px;background:#d67a2c;border-radius:2px"></div>
<span id="t108" class="t" style="top:912.94px;line-height:17px;font-size:12px;letter-spacing:-0.134px;left:737.4px;">Dropped Call</span>
<div style="left:821.2px;top:917px;width:20px;height:10px;background:#c9cbcd;border-radius:2px"></div>
<span id="t109" class="t" style="top:912.94px;line-height:17px;font-size:12px;letter-spacing:-0.014px;left:848.8px;">Other Auto</span>
<div style="left:921.1px;top:917px;width:20px;height:10px;background:#5bc16c;border-radius:2px"></div>
<span id="t110" class="t" style="top:912.94px;line-height:17px;font-size:12px;letter-spacing:0.008px;left:949px;">Routed to Agents</span>
<span id="t111" class="t" style="top:976.18px;line-height:35px;font-size:24px;color:#4a5f75;letter-spacing:-0.5px;left:220.3px;">Details</span>
<div style="left:220px;top:1017px;width:2057px;height:300px;background:#fff;border-radius:6px 6px 0 0"></div>
<div style="left:221px;top:1018px;width:2055px;height:49px;background:#f3f3f3;border-radius:5px 5px 0 0"></div>
<div style="left:221px;top:1067px;width:2055px;height:1px;background:#d8d8d8"></div>
<div style="left:221px;top:1107px;width:2055px;height:1px;background:#d8d8d8"></div>
<div style="left:221px;top:1147px;width:2055px;height:1px;background:#d8d8d8"></div>
<div style="left:221px;top:1187px;width:2055px;height:1px;background:#d8d8d8"></div>
<div style="left:221px;top:1227px;width:2055px;height:1px;background:#d8d8d8"></div>
<div style="left:221px;top:1267px;width:2055px;height:1px;background:#d8d8d8"></div>
<div style="left:221px;top:1307px;width:2055px;height:1px;background:#d8d8d8"></div>
<div style="left:364px;top:1018px;width:1px;height:280px;background:#d8d8d8"></div>
<div style="left:656px;top:1018px;width:1px;height:280px;background:#d8d8d8"></div>
<div style="left:823px;top:1018px;width:1px;height:280px;background:#d8d8d8"></div>
<div style="left:1030px;top:1018px;width:1px;height:280px;background:#d8d8d8"></div>
<div style="left:1306px;top:1018px;width:1px;height:280px;background:#d8d8d8"></div>
<div style="left:1477px;top:1018px;width:1px;height:280px;background:#d8d8d8"></div>
<div style="left:1640px;top:1018px;width:1px;height:280px;background:#d8d8d8"></div>
<div style="left:1851px;top:1018px;width:1px;height:280px;background:#d8d8d8"></div>
<div style="left:2021px;top:1018px;width:1px;height:280px;background:#d8d8d8"></div>
<span id="t112" class="t" style="top:1029.76px;line-height:23px;font-size:16px;font-weight:700;color:#333;letter-spacing:-0.473px;left:228.6px;">List ID</span>
<span id="t113" class="t" style="top:1029.76px;line-height:23px;font-size:16px;font-weight:700;color:#333;letter-spacing:-0.401px;left:372.6px;">List Name</span>
<span id="t114" class="t" style="top:1029.76px;line-height:23px;font-size:16px;font-weight:700;color:#333;letter-spacing:-0.382px;left:664.6px;">Total Calls</span>
<span id="t115" class="t" style="top:1029.76px;line-height:23px;font-size:16px;font-weight:700;color:#333;letter-spacing:-0.560px;left:831.6px;">Disconnected</span>
<span id="t116" class="t" style="top:1029.76px;line-height:23px;font-size:16px;font-weight:700;color:#333;letter-spacing:-0.606px;left:1038.6px;">Auto Answerphone</span>
<span id="t117" class="t" style="top:1029.76px;line-height:23px;font-size:16px;font-weight:700;color:#333;letter-spacing:-0.528px;left:1314.6px;">No Answer</span>
<span id="t118" class="t" style="top:1029.76px;line-height:23px;font-size:16px;font-weight:700;color:#333;letter-spacing:-0.745px;left:1485.6px;">Auto Busy</span>
<span id="t119" class="t" style="top:1029.76px;line-height:23px;font-size:16px;font-weight:700;color:#333;letter-spacing:-0.620px;left:1648.6px;">Dropped Calls</span>
<span id="t120" class="t" style="top:1029.76px;line-height:23px;font-size:16px;font-weight:700;color:#333;letter-spacing:-0.520px;left:1859.6px;">Other Auto</span>
<span id="t121" class="t" style="top:1029.76px;line-height:23px;font-size:16px;font-weight:700;color:#333;letter-spacing:-0.506px;left:2029.6px;">Routed to Agents</span>
<span id="t122" class="t" style="top:1074.96px;line-height:23px;font-size:16px;letter-spacing:0.094px;left:228.6px;">1000001</span>
<span id="t123" class="t" style="top:1074.96px;line-height:23px;font-size:16px;letter-spacing:-0.160px;left:372.6px;">Scotland Day 1</span>
<span id="t124" class="t" style="top:1074.96px;line-height:23px;font-size:16px;letter-spacing:0.094px;left:664.6px;">94</span>
<span id="t125" class="t" style="top:1074.96px;line-height:23px;font-size:16px;letter-spacing:0.094px;left:831.6px;">0</span>
<span id="t126" class="t" style="top:1074.96px;line-height:23px;font-size:16px;letter-spacing:0.094px;left:1038.6px;">0</span>
<span id="t127" class="t" style="top:1074.96px;line-height:23px;font-size:16px;letter-spacing:0.094px;left:1314.6px;">10</span>
<span id="t128" class="t" style="top:1074.96px;line-height:23px;font-size:16px;letter-spacing:0.094px;left:1485.6px;">4</span>
<span id="t129" class="t" style="top:1074.96px;line-height:23px;font-size:16px;letter-spacing:0.094px;left:1648.6px;">0</span>
<span id="t130" class="t" style="top:1074.96px;line-height:23px;font-size:16px;letter-spacing:0.094px;left:1859.6px;">0</span>
<span id="t131" class="t" style="top:1074.96px;line-height:23px;font-size:16px;letter-spacing:0.094px;left:2029.6px;">80</span>
<span id="t132" class="t" style="top:1114.96px;line-height:23px;font-size:16px;letter-spacing:0.094px;left:228.6px;">1000002</span>
<span id="t133" class="t" style="top:1114.96px;line-height:23px;font-size:16px;letter-spacing:-0.222px;left:372.6px;">Scotland Day 2 - 7</span>
<span id="t134" class="t" style="top:1114.96px;line-height:23px;font-size:16px;letter-spacing:0.094px;left:664.6px;">162</span>
<span id="t135" class="t" style="top:1114.96px;line-height:23px;font-size:16px;letter-spacing:0.094px;left:831.6px;">1</span>
<span id="t136" class="t" style="top:1114.96px;line-height:23px;font-size:16px;letter-spacing:0.094px;left:1038.6px;">0</span>
<span id="t137" class="t" style="top:1114.96px;line-height:23px;font-size:16px;letter-spacing:0.094px;left:1314.6px;">20</span>
<span id="t138" class="t" style="top:1114.96px;line-height:23px;font-size:16px;letter-spacing:0.094px;left:1485.6px;">9</span>
<span id="t139" class="t" style="top:1114.96px;line-height:23px;font-size:16px;letter-spacing:0.094px;left:1648.6px;">0</span>
<span id="t140" class="t" style="top:1114.96px;line-height:23px;font-size:16px;letter-spacing:0.094px;left:1859.6px;">0</span>
<span id="t141" class="t" style="top:1114.96px;line-height:23px;font-size:16px;letter-spacing:0.094px;left:2029.6px;">132</span>
<span id="t142" class="t" style="top:1154.96px;line-height:23px;font-size:16px;letter-spacing:0.094px;left:228.6px;">1000008</span>
<span id="t143" class="t" style="top:1154.96px;line-height:23px;font-size:16px;letter-spacing:-0.206px;left:372.6px;">Scotland Day 8 - 14</span>
<span id="t144" class="t" style="top:1154.96px;line-height:23px;font-size:16px;letter-spacing:0.094px;left:664.6px;">63</span>
<span id="t145" class="t" style="top:1154.96px;line-height:23px;font-size:16px;letter-spacing:0.094px;left:831.6px;">0</span>
<span id="t146" class="t" style="top:1154.96px;line-height:23px;font-size:16px;letter-spacing:0.094px;left:1038.6px;">0</span>
<span id="t147" class="t" style="top:1154.96px;line-height:23px;font-size:16px;letter-spacing:0.094px;left:1314.6px;">7</span>
<span id="t148" class="t" style="top:1154.96px;line-height:23px;font-size:16px;letter-spacing:0.094px;left:1485.6px;">1</span>
<span id="t149" class="t" style="top:1154.96px;line-height:23px;font-size:16px;letter-spacing:0.094px;left:1648.6px;">0</span>
<span id="t150" class="t" style="top:1154.96px;line-height:23px;font-size:16px;letter-spacing:0.094px;left:1859.6px;">0</span>
<span id="t151" class="t" style="top:1154.96px;line-height:23px;font-size:16px;letter-spacing:0.094px;left:2029.6px;">55</span>
<span id="t152" class="t" style="top:1194.96px;line-height:23px;font-size:16px;letter-spacing:0.094px;left:228.6px;">1000015</span>
<span id="t153" class="t" style="top:1194.96px;line-height:23px;font-size:16px;letter-spacing:-0.191px;left:372.6px;">Scotland Day 15 - 22</span>
<span id="t154" class="t" style="top:1194.96px;line-height:23px;font-size:16px;letter-spacing:0.094px;left:664.6px;">49</span>
<span id="t155" class="t" style="top:1194.96px;line-height:23px;font-size:16px;letter-spacing:0.094px;left:831.6px;">0</span>
<span id="t156" class="t" style="top:1194.96px;line-height:23px;font-size:16px;letter-spacing:0.094px;left:1038.6px;">0</span>
<span id="t157" class="t" style="top:1194.96px;line-height:23px;font-size:16px;letter-spacing:0.094px;left:1314.6px;">7</span>
<span id="t158" class="t" style="top:1194.96px;line-height:23px;font-size:16px;letter-spacing:0.094px;left:1485.6px;">0</span>
<span id="t159" class="t" style="top:1194.96px;line-height:23px;font-size:16px;letter-spacing:0.094px;left:1648.6px;">0</span>
<span id="t160" class="t" style="top:1194.96px;line-height:23px;font-size:16px;letter-spacing:0.094px;left:1859.6px;">0</span>
<span id="t161" class="t" style="top:1194.96px;line-height:23px;font-size:16px;letter-spacing:0.094px;left:2029.6px;">42</span>
<span id="t162" class="t" style="top:1234.96px;line-height:23px;font-size:16px;letter-spacing:0.094px;left:228.6px;">1000023</span>
<span id="t163" class="t" style="top:1234.96px;line-height:23px;font-size:16px;letter-spacing:-0.191px;left:372.6px;">Scotland Day 23 - 30</span>
<span id="t164" class="t" style="top:1234.96px;line-height:23px;font-size:16px;letter-spacing:0.094px;left:664.6px;">13</span>
<span id="t165" class="t" style="top:1234.96px;line-height:23px;font-size:16px;letter-spacing:0.094px;left:831.6px;">0</span>
<span id="t166" class="t" style="top:1234.96px;line-height:23px;font-size:16px;letter-spacing:0.094px;left:1038.6px;">0</span>
<span id="t167" class="t" style="top:1234.96px;line-height:23px;font-size:16px;letter-spacing:0.094px;left:1314.6px;">3</span>
<span id="t168" class="t" style="top:1234.96px;line-height:23px;font-size:16px;letter-spacing:0.094px;left:1485.6px;">0</span>
<span id="t169" class="t" style="top:1234.96px;line-height:23px;font-size:16px;letter-spacing:0.094px;left:1648.6px;">0</span>
<span id="t170" class="t" style="top:1234.96px;line-height:23px;font-size:16px;letter-spacing:0.094px;left:1859.6px;">0</span>
<span id="t171" class="t" style="top:1234.96px;line-height:23px;font-size:16px;letter-spacing:0.094px;left:2029.6px;">10</span>
<span id="t172" class="t" style="top:1274.96px;line-height:23px;font-size:16px;letter-spacing:0.094px;left:228.6px;">1000061</span>
<span id="t173" class="t" style="top:1274.96px;line-height:23px;font-size:16px;letter-spacing:-0.191px;left:372.6px;">Scotland Day 61 - 90</span>
<span id="t174" class="t" style="top:1274.96px;line-height:23px;font-size:16px;letter-spacing:0.094px;left:664.6px;">1</span>
<span id="t175" class="t" style="top:1274.96px;line-height:23px;font-size:16px;letter-spacing:0.094px;left:831.6px;">0</span>
<span id="t176" class="t" style="top:1274.96px;line-height:23px;font-size:16px;letter-spacing:0.094px;left:1038.6px;">0</span>
<span id="t177" class="t" style="top:1274.96px;line-height:23px;font-size:16px;letter-spacing:0.094px;left:1314.6px;">0</span>
<span id="t178" class="t" style="top:1274.96px;line-height:23px;font-size:16px;letter-spacing:0.094px;left:1485.6px;">0</span>
<span id="t179" class="t" style="top:1274.96px;line-height:23px;font-size:16px;letter-spacing:0.094px;left:1648.6px;">0</span>
<span id="t180" class="t" style="top:1274.96px;line-height:23px;font-size:16px;letter-spacing:0.094px;left:1859.6px;">0</span>
<span id="t181" class="t" style="top:1274.96px;line-height:23px;font-size:16px;letter-spacing:0.094px;left:2029.6px;">1</span>
</div>
</body></html>
